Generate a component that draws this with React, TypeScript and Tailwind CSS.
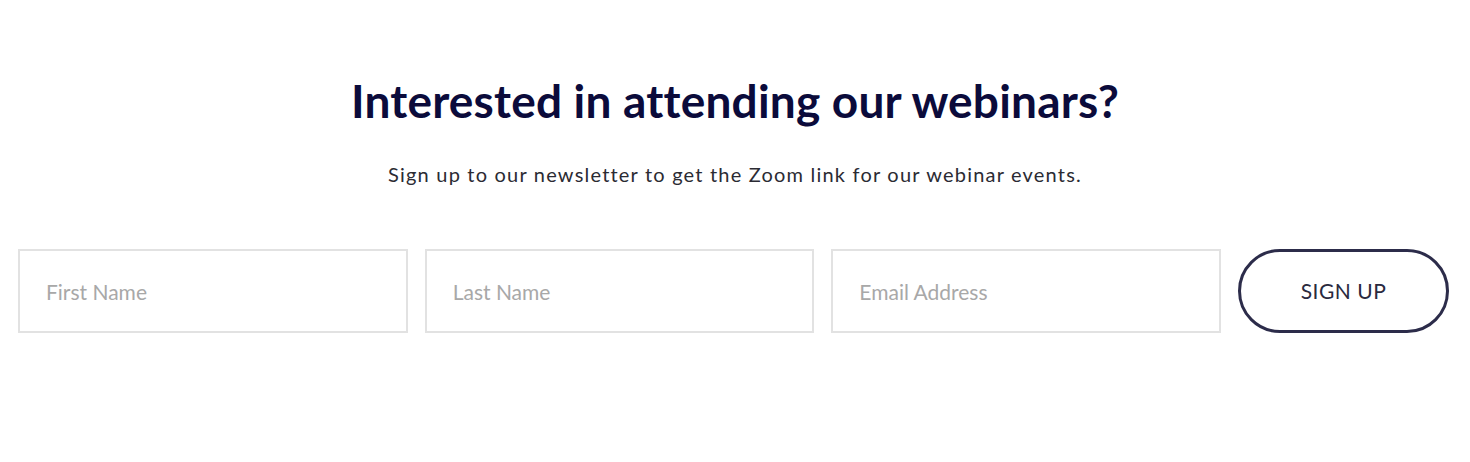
export default function App() {
  const fields = ["First Name", "Last Name", "Email Address"];

  return (
    <div className="min-h-[462px] w-full bg-white font-['Lato','Liberation_Sans',sans-serif]">
      <div className="flex flex-col items-center pt-[72px]">
        <h2 className="text-[46px] font-bold leading-[58px] tracking-[0.2px] text-[#0b0b3b]">
          Interested in attending our webinars?
        </h2>
        <p className="mt-[30px] text-[20px] leading-[28px] tracking-[1.2px] text-[#2b2b33]">
          Sign up to our newsletter to get the Zoom link for our webinar events.
        </p>
      </div>

      <form className="mt-[61px] flex gap-[17px] pl-[18px] pr-[21px]">
        {fields.map((f) => (
          <input
            key={f}
            type="text"
            placeholder={f}
            className="h-[84px] min-w-0 flex-1 border-2 border-[#e2e2e2] bg-white px-[26px] text-[21px] text-[#333] outline-none placeholder:text-[#a8a8a8]"
          />
        ))}
        <button
          type="button"
          className="h-[84px] w-[211px] shrink-0 rounded-full border-[3px] border-[#2c2c4a] text-[21px] tracking-[0.5px] text-[#2a2a3e]"
        >
          SIGN UP
        </button>
      </form>
    </div>
  );
}
